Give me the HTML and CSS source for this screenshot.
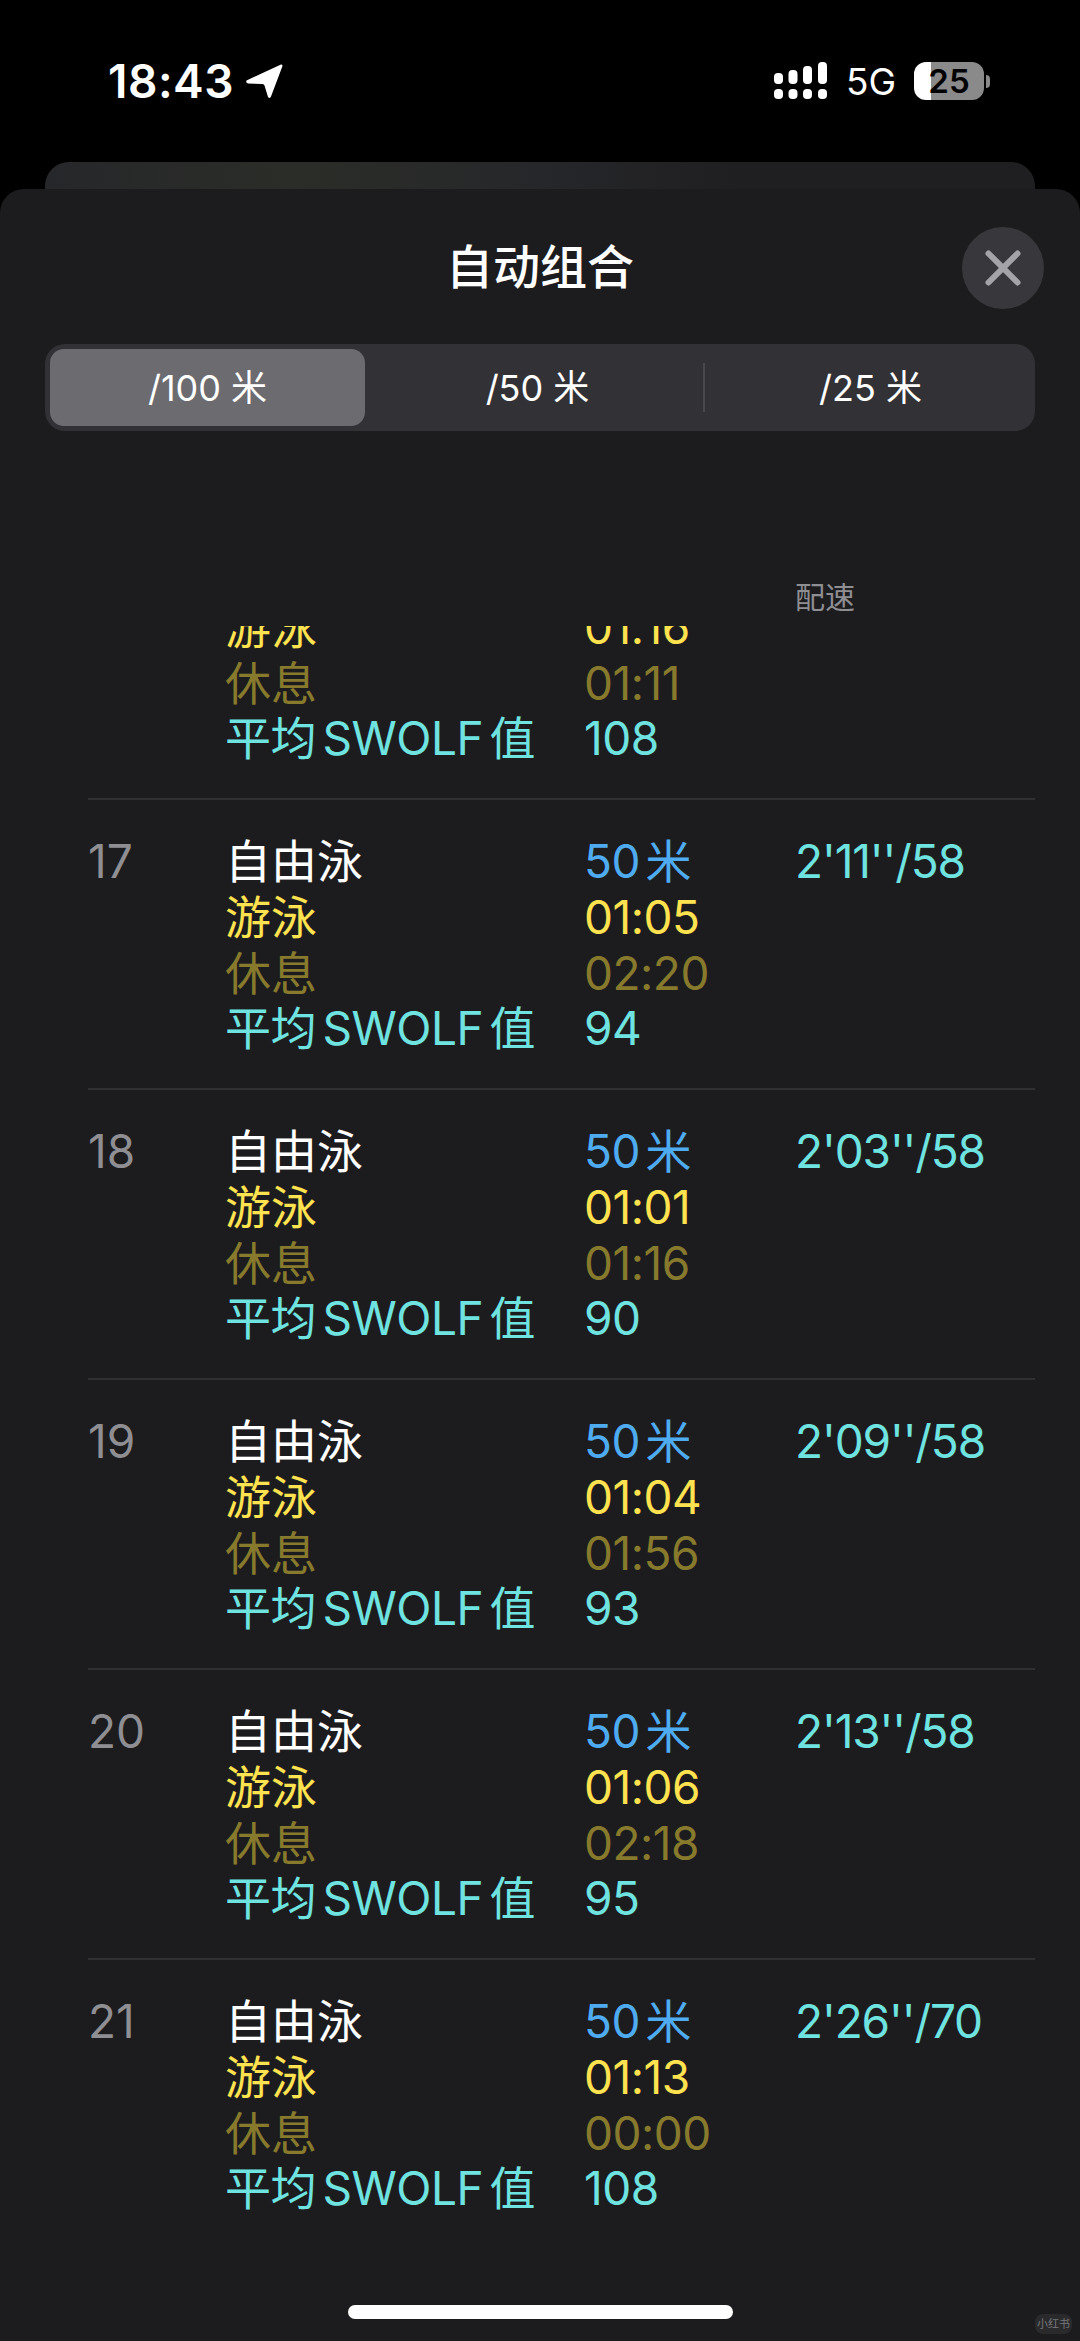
FILE: index.html
```html
<!DOCTYPE html>
<html lang="zh-CN">
<head>
    <meta charset="UTF-8">
    <meta name="viewport" content="width=device-width, initial-scale=1.0">
    <title>自动组合</title>
    <link rel="stylesheet" href="styles.css">
</head>
<body>
    <header class="status-bar">
        <div class="status-left">
            <span class="time">18:43</span>
            <svg class="location" width="38" height="36" viewBox="0 0 38 36"><path d="M36 1.5 L1.5 17.5 Q0.5 20 3 20.5 L17.5 21 Q19 21 19.5 22.5 L23 34 Q25 36 26 33.5 L37.5 3 Q37.5 1 36 1.5 Z" fill="#fff"/></svg>
        </div>
        <div class="status-right">
            <svg class="signal" width="54" height="38" viewBox="0 0 54 38">
                <rect x="0" y="11" width="9" height="11" rx="4" fill="#fff"/>
                <rect x="14.5" y="8" width="9" height="14" rx="4" fill="#fff"/>
                <rect x="29" y="4" width="9" height="18" rx="4" fill="#fff"/>
                <rect x="44" y="0" width="9" height="22" rx="4" fill="#fff"/>
                <rect x="0" y="27" width="9" height="10" rx="4" fill="#fff"/>
                <rect x="14.5" y="27" width="9" height="10" rx="4" fill="#fff"/>
                <rect x="29" y="27" width="9" height="10" rx="4" fill="#fff"/>
                <rect x="44" y="27" width="9" height="10" rx="4" fill="#fff"/>
            </svg>
            <span class="network">5G</span>
            <div class="battery"><span>25</span></div>
            <div class="battery-nub"></div>
        </div>
    </header>

    <div class="back-sheet"></div>

    <main class="sheet">
        <div class="sheet-head">
            <h1 class="sheet-title">自动组合</h1>
            <button class="close-btn">
                <svg width="36" height="36" viewBox="0 0 36 36"><path d="M3.5 3.5 L32.5 32.5 M32.5 3.5 L3.5 32.5" stroke="#a4a4a8" stroke-width="6" stroke-linecap="round"/></svg>
            </button>
        </div>

        <div class="segments">
            <div class="segment active">/100 米</div>
            <div class="segment middle">/50 米</div>
            <div class="segment-line"></div>
            <div class="segment last">/25 米</div>
        </div>

        <div class="col-head">配速</div>

        <div class="laps">
            <div class="lap-list">
                <div class="lap">
                    <div class="lap-num"></div>
                    <div class="lap-names">
                        <div class="white">自由泳</div>
                        <div class="yellow">游泳</div>
                        <div class="olive">休息</div>
                        <div class="cyan">平均 SWOLF 值</div>
                    </div>
                    <div class="lap-vals">
                        <div class="blue">50 米</div>
                        <div class="yellow">01:16</div>
                        <div class="olive">01:11</div>
                        <div class="cyan">108</div>
                    </div>
                    <div class="lap-pace cyan"></div>
                </div>
                <div class="lap">
                    <div class="lap-num">17</div>
                    <div class="lap-names">
                        <div class="white">自由泳</div>
                        <div class="yellow">游泳</div>
                        <div class="olive">休息</div>
                        <div class="cyan">平均 SWOLF 值</div>
                    </div>
                    <div class="lap-vals">
                        <div class="blue">50 米</div>
                        <div class="yellow">01:05</div>
                        <div class="olive">02:20</div>
                        <div class="cyan">94</div>
                    </div>
                    <div class="lap-pace cyan">2'11''/58</div>
                </div>
                <div class="lap">
                    <div class="lap-num">18</div>
                    <div class="lap-names">
                        <div class="white">自由泳</div>
                        <div class="yellow">游泳</div>
                        <div class="olive">休息</div>
                        <div class="cyan">平均 SWOLF 值</div>
                    </div>
                    <div class="lap-vals">
                        <div class="blue">50 米</div>
                        <div class="yellow">01:01</div>
                        <div class="olive">01:16</div>
                        <div class="cyan">90</div>
                    </div>
                    <div class="lap-pace cyan">2'03''/58</div>
                </div>
                <div class="lap">
                    <div class="lap-num">19</div>
                    <div class="lap-names">
                        <div class="white">自由泳</div>
                        <div class="yellow">游泳</div>
                        <div class="olive">休息</div>
                        <div class="cyan">平均 SWOLF 值</div>
                    </div>
                    <div class="lap-vals">
                        <div class="blue">50 米</div>
                        <div class="yellow">01:04</div>
                        <div class="olive">01:56</div>
                        <div class="cyan">93</div>
                    </div>
                    <div class="lap-pace cyan">2'09''/58</div>
                </div>
                <div class="lap">
                    <div class="lap-num">20</div>
                    <div class="lap-names">
                        <div class="white">自由泳</div>
                        <div class="yellow">游泳</div>
                        <div class="olive">休息</div>
                        <div class="cyan">平均 SWOLF 值</div>
                    </div>
                    <div class="lap-vals">
                        <div class="blue">50 米</div>
                        <div class="yellow">01:06</div>
                        <div class="olive">02:18</div>
                        <div class="cyan">95</div>
                    </div>
                    <div class="lap-pace cyan">2'13''/58</div>
                </div>
                <div class="lap">
                    <div class="lap-num">21</div>
                    <div class="lap-names">
                        <div class="white">自由泳</div>
                        <div class="yellow">游泳</div>
                        <div class="olive">休息</div>
                        <div class="cyan">平均 SWOLF 值</div>
                    </div>
                    <div class="lap-vals">
                        <div class="blue">50 米</div>
                        <div class="yellow">01:13</div>
                        <div class="olive">00:00</div>
                        <div class="cyan">108</div>
                    </div>
                    <div class="lap-pace cyan">2'26''/70</div>
                </div>
            </div>
        </div>

        <div class="home-bar"></div>
        <div class="watermark">小红书</div>
    </main>
</body>
</html>
```

FILE: styles.css
```css
* {
    box-sizing: border-box;
}

body {
    margin: 0;
    width: 1080px;
    height: 2341px;
    overflow: hidden;
    display: flex;
    flex-direction: column;
    background-color: #000;
    color: #fff;
    font-family: 'Inter', 'Noto Sans CJK SC', sans-serif;
}

.status-bar {
    height: 162px;
    flex-shrink: 0;
    display: flex;
    justify-content: space-between;
    align-items: flex-start;
    padding: 61px 90px 0 108px;
}

.status-left {
    display: flex;
    align-items: center;
    gap: 11px;
}

.time {
    font-size: 46px;
    line-height: 40px;
    font-weight: 600;
    letter-spacing: 0.5px;
}

.status-right {
    display: flex;
    align-items: center;
    height: 40px;
}

.signal {
    margin-right: 18px;
}

.network {
    font-size: 37px;
    margin-right: 18px;
}

.battery {
    width: 70px;
    height: 38px;
    border-radius: 12px;
    background: linear-gradient(90deg, #fff 24%, #8a8a8a 24%);
    color: #000;
    font-size: 33px;
    font-weight: 600;
    line-height: 38px;
    text-align: center;
}

.battery-nub {
    width: 4px;
    height: 13px;
    margin-left: 2px;
    background-color: #8a8a8a;
    border-radius: 0 4px 4px 0;
}

.back-sheet {
    height: 27px;
    flex-shrink: 0;
    margin: 0 45px;
    border-radius: 24px 24px 0 0;
    background: linear-gradient(90deg, #26272a 0%, #2b2d28 25%, #26272a 50%, #1f1f21 70%, #1f1f21 100%);
}

.sheet {
    flex: 1;
    position: relative;
    display: flex;
    flex-direction: column;
    min-height: 0;
    background-color: #1c1c1e;
    border-radius: 24px 24px 0 0;
}

.sheet-head {
    position: relative;
    height: 155px;
    flex-shrink: 0;
    padding-bottom: 6px;
    display: flex;
    justify-content: center;
    align-items: center;
}

.sheet-title {
    margin: 0;
    font-size: 47px;
    font-weight: 500;
}

.close-btn {
    position: absolute;
    right: 36px;
    top: 38px;
    width: 82px;
    height: 82px;
    padding: 0;
    border: none;
    border-radius: 50%;
    background-color: #38383c;
    display: flex;
    justify-content: center;
    align-items: center;
}

.segments {
    height: 87px;
    flex-shrink: 0;
    margin: 0 45px;
    padding: 5px;
    display: flex;
    align-items: center;
    background-color: #323236;
    border-radius: 20px;
}

.segment {
    height: 77px;
    padding-bottom: 5px;
    display: flex;
    justify-content: center;
    align-items: center;
    font-size: 36px;
    border-radius: 14px;
}

.segment.active {
    width: 315px;
    background-color: #6b6b70;
}

.segment.middle {
    width: 338px;
    padding-left: 7px;
}

.segment.last {
    flex: 1;
    padding-left: 6px;
}

.segment-line {
    width: 2px;
    height: 49px;
    background-color: #48484c;
}

.col-head {
    height: 40px;
    flex-shrink: 0;
    margin: 146px 0 0 795px;
    font-size: 30px;
    line-height: 40px;
    color: #8e8e93;
}

.laps {
    flex: 1;
    min-height: 0;
    overflow: hidden;
    margin-top: 9px;
}

.lap-list {
    margin-top: -116px;
}

.lap {
    height: 290px;
    margin-left: 88px;
    margin-right: 45px;
    padding-top: 34px;
    display: grid;
    grid-template-columns: 137px 359px 211px 1fr;
    border-bottom: 2px solid #303033;
    font-size: 46px;
    line-height: 55.8px;
    word-spacing: -6px;
}

.lap:last-child {
    border-bottom: none;
}

.lap-num {
    color: #8e8e93;
}

.lap-names .cyan {
    letter-spacing: -0.5px;
}

.lap-vals {
    letter-spacing: -0.5px;
}

.lap-vals .blue {
    word-spacing: -7px;
}

.lap-pace {
    letter-spacing: -1.1px;
}

.white {
    color: #fff;
}

.yellow {
    color: #ffe24f;
}

.olive {
    color: #877a2d;
}

.cyan {
    color: #6fe3e0;
}

.blue {
    color: #4fabf0;
}

.home-bar {
    flex-shrink: 0;
    width: 385px;
    height: 14px;
    margin: 0 auto 22px;
    background-color: #fff;
    border-radius: 7px;
}

.watermark {
    position: absolute;
    right: 8px;
    bottom: 7px;
    width: 37px;
    height: 20px;
    background-color: #2a2a2c;
    border-radius: 8px;
    color: #77777a;
    font-size: 11px;
    line-height: 20px;
    text-align: center;
}
```
